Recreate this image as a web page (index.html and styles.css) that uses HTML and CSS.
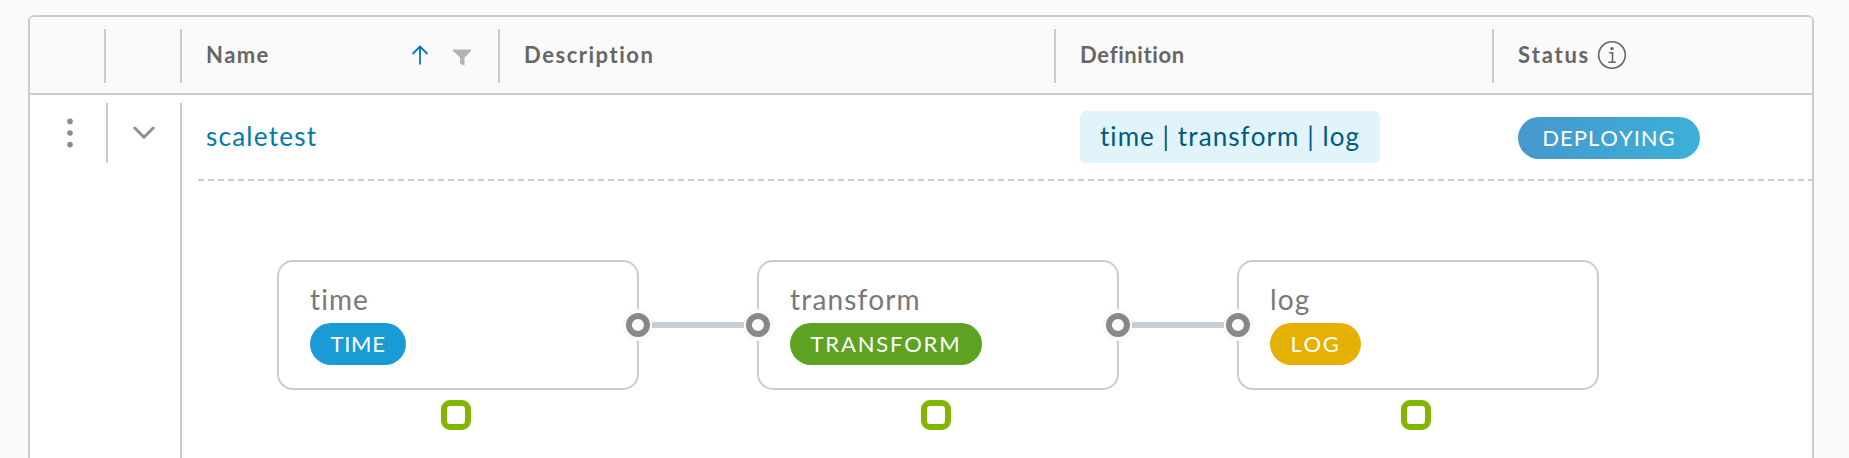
FILE: index.html
```html
<!DOCTYPE html>
<html lang="en">
<head>
<meta charset="utf-8">
<title>Streams</title>
<link rel="stylesheet" href="styles.css">
</head>
<body>
<main class="datagrid">
  <header class="grid-head">
    <div class="head-cell"></div>
    <div class="head-cell"></div>
    <div class="head-cell"><span class="head-name">Name</span>
      <span class="head-tools">
        <svg class="sort-icon" width="18" height="20" viewBox="0 0 18 20"><path d="M9 19.500V2M1.500 9L9 1.500L16.500 9"/></svg>
        <svg class="filter-icon" width="18" height="17" viewBox="0 0 18 17"><path d="M0 .5H18V2L11.500 8.500V16.500L7 14.500V8.500L0 2Z"/></svg>
      </span>
    </div>
    <div class="head-cell"><span class="head-description">Description</span></div>
    <div class="head-cell"><span class="head-definition">Definition</span></div>
    <div class="head-cell head-last"><span class="head-status">Status</span>
      <svg class="info-icon" width="30" height="30" viewBox="0 0 30 30"><circle cx="15" cy="15" r="13.300"/><path d="M12.200 12.700H15.500V22.200M11.300 22.300H18.800"/><circle class="info-dot" cx="15" cy="8.600" r="1.700"/></svg>
    </div>
  </header>
  <section class="grid-row">
    <div class="action-cell"><svg width="6" height="30" viewBox="0 0 6 30"><circle cx="3" cy="3.400" r="2.800"/><circle cx="3" cy="15" r="2.800"/><circle cx="3" cy="26.600" r="2.800"/></svg></div>
    <div class="expand-cell"><svg width="22" height="14" viewBox="0 0 22 14"><path d="M1.800 2L11 11.200L20.200 2"/></svg></div>
    <div class="row-main">
      <div class="row-cells">
        <a class="stream-name">scaletest</a>
        <div class="definition-cell"><span class="chip">time | transform | log</span></div>
        <div class="status-cell"><span class="badge badge-status">DEPLOYING</span></div>
      </div>
      <div class="graph">
        <div class="node"><div class="card"><div class="node-title">time</div><span class="badge badge-time">TIME</span><i class="port port-out"></i></div><i class="instance"></i></div>
        <div class="link"></div>
        <div class="node"><div class="card"><div class="node-title">transform</div><span class="badge badge-transform">TRANSFORM</span><i class="port port-in"></i><i class="port port-out"></i></div><i class="instance"></i></div>
        <div class="link"></div>
        <div class="node"><div class="card"><div class="node-title">log</div><span class="badge badge-log">LOG</span><i class="port port-in"></i></div><i class="instance"></i></div>
      </div>
    </div>
  </section>
</main>
</body>
</html>
```
FILE: styles.css
```css
* { box-sizing: border-box; }
body { margin: 0; height: 458px; overflow: hidden; background: #fafafa; font-family: Lato, sans-serif; font-size: 26px; font-kerning: none; white-space: nowrap; }
.datagrid { width: 1786px; height: 460px; margin: 15px 0 0 28px; border: 2px solid #ccc; border-radius: 6px; background: #fff; overflow: hidden; }
.grid-head { display: grid; grid-template-columns: 76px 76px 318px 556px 438px 1fr; height: 78px; padding: 12px 0 10px; border-bottom: 2px solid #ccc; background: #fafafa; color: #666; font-size: 22px; font-weight: 700; line-height: 52px; }
.head-cell { display: flex; align-items: center; height: 54px; padding: 0 0 2px 24px; border-right: 2px solid #ccc; }
.head-last { border-right: 0; }
.head-tools { display: flex; align-items: center; gap: 24px; margin-left: auto; padding-right: 27px; }
.sort-icon { fill: none; stroke: #0079b8; stroke-width: 1.8; }
.filter-icon { fill: #b3b3b3; margin-top: 4px; }
.info-icon { margin-left: 7px; fill: none; stroke: #666; stroke-width: 1.6; }
.info-dot { fill: #666; stroke: none; }
.head-name { letter-spacing: 1.3px; }
.head-description { letter-spacing: 1.5px; }
.head-definition { letter-spacing: .6px; }
.head-status { letter-spacing: 1.7px; }

.grid-row { display: grid; grid-template-columns: 78px 72px 1fr; height: 380px; padding-top: 8px; }
.action-cell { height: 60px; padding: 15px 0 0 37px; border-right: 2px solid #ccc; fill: #8c8c8c; line-height: 0; }
.expand-cell { padding: 23px 0 0 25px; line-height: 0; fill: none; stroke: #8c8c8c; stroke-width: 3; stroke-linecap: round; }
.row-main { border-left: 2px solid #ccc; padding-left: 16px; }
.row-cells { display: grid; grid-template-columns: 882px 438px 1fr; height: 78px; padding-top: 8px; background: repeating-linear-gradient(90deg, #ccc 0 6px, transparent 6px 10px) left bottom / 100% 2px no-repeat; }
.stream-name { padding-left: 8px; color: #0079ad; line-height: 50px; letter-spacing: 1.25px; }
.chip { display: block; width: 300px; height: 52px; padding-left: 20px; border-radius: 6px; background: #e1f4fc; color: #005a80; line-height: 50px; letter-spacing: 1.05px; }
.badge { display: flex; align-items: center; justify-content: center; height: 42px; padding-bottom: 1px; border-radius: 21px; color: #fff; font-size: 22px; line-height: 40px; }
.badge-status { width: 182px; margin-top: 6px; background: linear-gradient(90deg, #4698ce, #3bb0d8); letter-spacing: 1px; }
.badge-time { width: 96px; background: #1a9bd5; letter-spacing: .7px; }
.badge-transform { width: 192px; background: #5da220; letter-spacing: 1.8px; }
.badge-log { width: 91px; background: #e5b000; letter-spacing: 1.6px; }

.graph { display: flex; padding: 79px 0 0 79px; }
.node { display: flex; flex-direction: column; gap: 10px; width: 362px; }
.card { position: relative; width: 362px; height: 130px; padding: 19px 31px; border: 2px solid #ccc; border-radius: 16px; background: #fff; }
.node-title { height: 42px; color: #787878; font-size: 28px; line-height: 36px; letter-spacing: 1.1px; }
.link { z-index: 2; width: 92px; height: 6px; margin: 62px 13px 0; background: #c5cfd5; }
.port { position: absolute; z-index: 1; top: 51px; width: 24px; height: 24px; border: 6px solid #888; border-radius: 50%; background: #fafafa; box-shadow: 0 0 0 4px #fafafa; }
.port-in { left: -13px; }
.port-out { right: -13px; }
.instance { width: 30px; height: 30px; margin-left: 164px; border: 6px solid #82b600; border-radius: 9px; }
```
